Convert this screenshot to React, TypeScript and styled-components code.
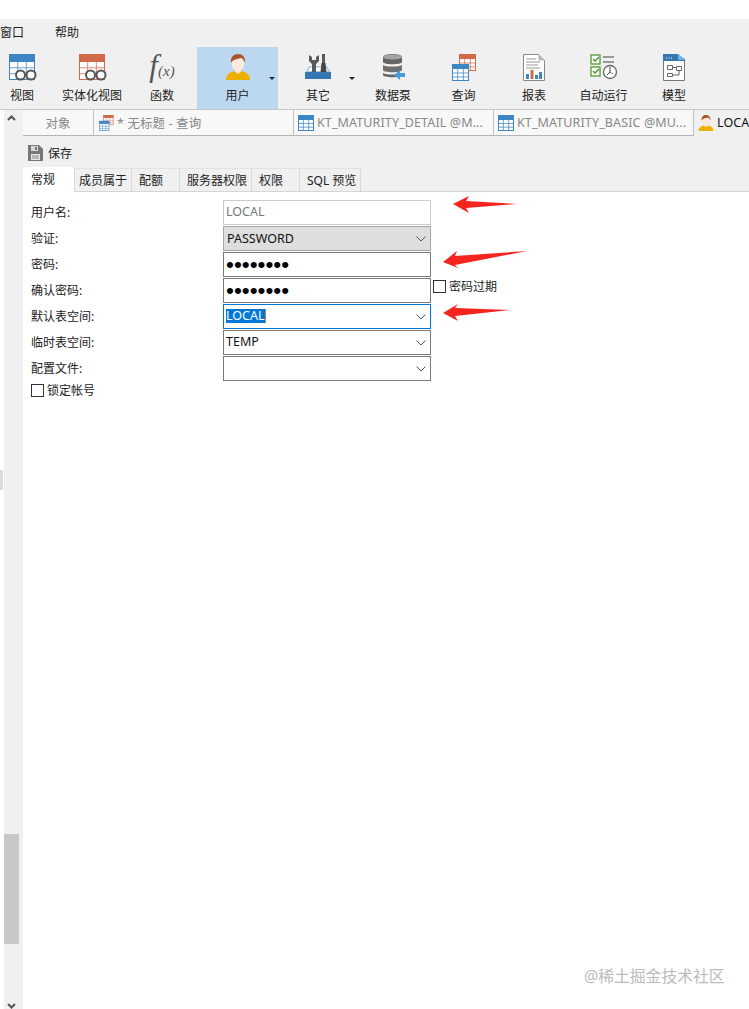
import styled, { createGlobalStyle } from "styled-components";

const GlobalStyle = createGlobalStyle`
  html, body {
    margin: 0;
    padding: 0;
    background: #fff;
  }
  body {
    font-family: "Noto Sans", "Noto Sans CJK SC", sans-serif;
    font-size: 12px;
    color: #222;
  }
`;

const Page = styled.div`
  position: relative;
  width: 749px;
  height: 1009px;
  overflow: hidden;
  background: #fff;
  padding-top: 19px;
  box-sizing: border-box;
  display: flex;
  flex-direction: column;
`;

const MenuBar = styled.div`
  height: 27px;
  background: #f0f0f0;
  display: flex;
  align-items: center;
  gap: 31px;
  span {
    line-height: 26px;
  }
`;

const Toolbar = styled.div`
  height: 63px;
  background: #f0f0f0;
  border-bottom: 1px solid #c8c8c8;
  box-sizing: content-box;
  display: flex;
`;

const ToolItem = styled.div<{ $w: number; $ml?: number; $active?: boolean }>`
  position: relative;
  width: ${(p) => p.$w}px;
  margin-left: ${(p) => p.$ml ?? 0}px;
  height: 62px;
  margin-top: 1px;
  box-sizing: border-box;
  padding-top: 7px;
  display: flex;
  flex-direction: column;
  align-items: center;
  background: ${(p) => (p.$active ? "#bcd8f0" : "transparent")};
  flex-shrink: 0;
`;

const ToolIconBox = styled.div`
  height: 27px;
  display: flex;
  justify-content: center;
  align-items: flex-start;
`;

const ToolLabel = styled.div`
  margin-top: 7px;
  line-height: 16px;
  white-space: nowrap;
`;

const Caret = styled.i`
  position: absolute;
  right: 3px;
  top: 30px;
  width: 0;
  height: 0;
  border-left: 3px solid transparent;
  border-right: 3px solid transparent;
  border-top: 3px solid #222;
`;

const Fx = styled.div`
  font-family: "Liberation Serif", serif;
  font-style: italic;
  color: #555;
  font-size: 31px;
  line-height: 23px;
  white-space: nowrap;
  span {
    font-size: 15px;
    margin-left: 0;
  }
`;

const Body = styled.div`
  flex: 1;
  display: flex;
  min-height: 0;
`;

const Rail = styled.div`
  width: 19px;
  margin-left: 4px;
  background: #f0f0f0;
  display: flex;
  flex-direction: column;
  flex-shrink: 0;
`;

const RailArrow = styled.svg`
  display: block;
  margin: 5px 0 0 3px;
`;

const RailThumb = styled.div`
  margin-top: auto;
  width: 15px;
  height: 110px;
  background: #c8c8c8;
`;

const RailFoot = styled.div`
  height: 65px;
  display: flex;
  align-items: flex-end;
  svg {
    margin: 0 0 0 3px;
  }
`;

const Notch = styled.div`
  position: absolute;
  left: 0;
  top: 470px;
  width: 3px;
  height: 20px;
  background: #dcdcdc;
`;

const Main = styled.div`
  flex: 1;
  min-width: 0;
  display: flex;
  flex-direction: column;
`;

const DocTabs = styled.div`
  height: 26px;
  display: flex;
  background: #f0f0f0;
`;

const DocTab = styled.div<{ $w: number; $active?: boolean; $center?: boolean }>`
  width: ${(p) => p.$w}px;
  flex-shrink: 0;
  box-sizing: border-box;
  height: 26px;
  display: flex;
  align-items: center;
  gap: 3px;
  white-space: nowrap;
  justify-content: ${(p) => (p.$center ? "center" : "flex-start")};
  padding-left: ${(p) => (p.$center ? 0 : 4)}px;
  background: ${(p) => (p.$active ? "#f0f0f0" : "#f8f8f8")};
  color: ${(p) => (p.$active ? "#111" : "#888")};
  border-bottom: 1px solid ${(p) => (p.$active ? "transparent" : "#b4b4b4")};
  border-right: 1px solid ${(p) => (p.$active ? "transparent" : "#c0c0c0")};
  font-size: 12.5px;
  letter-spacing: 0.12px;
  svg {
    flex-shrink: 0;
  }
`;

const SaveRow = styled.div`
  height: 31px;
  box-sizing: border-box;
  padding: 2px 0 0 5px;
  background: #f0f0f0;
  display: flex;
  align-items: center;
  gap: 5px;
`;

const SubTabs = styled.div`
  height: 25px;
  background: #f0f0f0;
  display: flex;
  align-items: flex-end;
  border-bottom: 1px solid #d6d6d6;
  box-sizing: border-box;
`;

const SubTab = styled.div<{ $w: number; $pad: number; $active?: boolean }>`
  width: ${(p) => p.$w}px;
  box-sizing: border-box;
  height: ${(p) => (p.$active ? 25 : 23)}px;
  margin-bottom: ${(p) => (p.$active ? -1 : 0)}px;
  padding-left: ${(p) => p.$pad}px;
  padding-bottom: ${(p) => (p.$active ? 2 : 0)}px;
  display: flex;
  align-items: center;
  background: ${(p) => (p.$active ? "#fff" : "#f0f0f0")};
  border-right: 1px solid #d9d9d9;
  border-top: ${(p) => (p.$active ? "none" : "1px solid #e2e2e2")};
  white-space: nowrap;
`;

const Content = styled.div`
  position: relative;
  flex: 1;
  background: #fff;
  padding: 8px 0 0 8px;
`;

const FormGrid = styled.div`
  display: grid;
  grid-template-columns: 192px 208px auto;
  grid-auto-rows: 25px;
  row-gap: 1px;
  align-items: center;
`;

const FieldLabel = styled.div`
  grid-column: 1;
  line-height: 25px;
`;

const Field = styled.div<{ $tone?: "disabled" | "gray" | "focus" }>`
  grid-column: 2;
  box-sizing: border-box;
  height: 25px;
  display: flex;
  align-items: center;
  justify-content: space-between;
  padding: 0 2px 0 ${(p) => (p.$tone === "gray" ? 3 : 2)}px;
  border: 1px solid
    ${(p) =>
      p.$tone === "disabled"
        ? "#cccccc"
        : p.$tone === "focus"
        ? "#0078d7"
        : p.$tone === "gray"
        ? "#a6a6a6"
        : "#7a7a7a"};
  background: ${(p) => (p.$tone === "gray" ? "#dedede" : "#fff")};
  color: ${(p) => (p.$tone === "disabled" ? "#777" : "#111")};
  font-size: 12.5px;
`;

const FieldText = styled.span`
  margin-top: -2px;
`;

const Dots = styled.span`
  font-family: "Liberation Sans", sans-serif;
  font-size: 22.5px;
  line-height: 20px;
  color: #000;
  height: 20px;
`;

const Selected = styled(FieldText)`
  background: #0078d7;
  color: #fff;
  line-height: 14px;
  border-right: 1px solid #b9803a;
`;

const Chevron = styled.svg`
  margin-right: 2px;
`;

const CheckRow = styled.label<{ $col?: number }>`
  grid-column: ${(p) => p.$col ?? 1} / span 1;
  display: flex;
  align-items: center;
  gap: 3px;
  white-space: nowrap;
`;

const ExpiryRow = styled(CheckRow)`
  margin-left: 2px;
  margin-top: -9px;
`;

const LockRow = styled(CheckRow)`
  margin-top: -9px;
`;

const Box = styled.i`
  display: block;
  box-sizing: border-box;
  width: 13px;
  height: 13px;
  border: 1px solid #333;
  background: #fff;
`;

const Annotations = styled.svg`
  position: absolute;
  left: 0;
  top: 0;
  width: 726px;
  height: 200px;
  pointer-events: none;
`;

const Watermark = styled.div`
  position: absolute;
  left: 584px;
  top: 964px;
  font-size: 15.8px;
  line-height: 24px;
  color: #bbb;
  white-space: nowrap;
`;

const Grid = ({ x, y, w, h, color }: { x: number; y: number; w: number; h: number; color: string }) => (
  <g>
    <rect x={x + 0.5} y={y + 0.5} width={w - 1} height={h - 1} fill="#fff" stroke={color} />
    <rect x={x} y={y} width={w} height={Math.round(h * 0.3)} fill={color} />
    {[1, 2].map((i) => (
      <line key={i} x1={x + (w * i) / 3} x2={x + (w * i) / 3} y1={y} y2={y + h} stroke={color} opacity={0.75} />
    ))}
    {[0.53, 0.76].map((f) => (
      <line key={f} x1={x} x2={x + w} y1={y + h * f} y2={y + h * f} stroke={color} opacity={0.75} />
    ))}
  </g>
);

const ViewIcon = ({ color }: { color: string }) => (
  <svg width="30" height="27" viewBox="0 0 30 27">
    <Grid x={2} y={0} w={26} h={26} color={color} />
    <circle cx="13.500" cy="21" r="4.500" fill="#fff" stroke="#555" strokeWidth="2" />
    <circle cx="24" cy="21" r="4.500" fill="#fff" stroke="#555" strokeWidth="2" />
  </svg>
);

const UserIcon = ({ size = 26 }: { size?: number }) => (
  <svg width={size} height={size} viewBox="0 0 26 26">
    <path d="M1 26c0-6 4-8 9-9h6c5 1 9 3 9 9z" fill="#eeb000" />
    <path d="M10 15h6v3l-3 2-3-2z" fill="#f8e3d4" />
    <ellipse cx="13" cy="9" rx="6.500" ry="8" fill="#fbe9de" />
    <path d="M6 9C5 3 9 0 13 0s8 3 7 9c-1-3-2-4-4-5-3 1-8 1-10 5z" fill="#a8552a" />
  </svg>
);

const ToolsIcon = () => (
  <svg width="28" height="27" viewBox="0 0 28 27">
    <path d="M5 12 1 19h26l-4-7z" fill="#a9c8e2" />
    <path d="M6 13.500 4 17h20l-2-3.500z" fill="#fff" />
    <rect x="1" y="18" width="26" height="7" fill="#3577b0" />
    <path d="M5 1v6l3 3v8h4v-8l3-3V1l-3 2v3H8V3z" fill="#5a5a5a" />
    <rect x="18" y="0" width="3" height="9" fill="#5a5a5a" />
    <path d="M17.500 9h4l1 9h-6z" fill="#444" />
  </svg>
);

const PumpIcon = () => (
  <svg width="26" height="27" viewBox="0 0 26 27">
    <g transform="translate(2 0)">
      <path d="M1 3c0-4 19-4 19 0v5c0 3-19 3-19 0z" fill="#666" />
      <path d="M1 11c3 2 16 2 19 0v5c0 3-19 3-19 0z" fill="#707070" />
      <path d="M1 19c3 2 16 2 19 0v2c0 3-19 3-19 0z" fill="#666" />
      <ellipse cx="10.500" cy="3" rx="9.500" ry="2.600" fill="#a5a5a5" />
    </g>
    <path d="M14 21l6-5v3h5v4h-5v3z" fill="#4a9ae0" />
  </svg>
);

const QueryIcon = ({ size = 27 }: { size?: number }) => (
  <svg width={size} height={size} viewBox="0 0 27 27">
    <Grid x={9} y={0} w={17} h={17} color="#d2694a" />
    <Grid x={2} y={10} w={17} h={17} color="#3d86c6" />
  </svg>
);

const ReportIcon = () => (
  <svg width="22" height="27" viewBox="0 0 22 27">
    <path d="M.5.5h15l6 6v20H.5z" fill="#fff" stroke="#888" />
    <path d="M15.500.5v6h6z" fill="#bbb" />
    <path d="M3 5h10M3 8h14M3 11h12M3 14h14" stroke="#999" />
    <rect x="3" y="20" width="3" height="5" fill="#3d86c6" />
    <rect x="7.500" y="16" width="3" height="9" fill="#d2694a" />
    <rect x="12" y="21" width="3" height="4" fill="#3d86c6" />
    <rect x="16" y="18" width="3" height="7" fill="#3d86c6" />
  </svg>
);

const AutoIcon = () => (
  <svg width="28" height="27" viewBox="0 0 28 27">
    <rect x="1" y="1" width="9" height="9" fill="#fff" stroke="#5e9e3c" strokeWidth="1.400" />
    <rect x="1" y="13" width="9" height="9" fill="#fff" stroke="#5e9e3c" strokeWidth="1.400" />
    <path d="M3 5l2 2 4-4M3 17l2 2 4-4" fill="none" stroke="#5e9e3c" strokeWidth="1.600" />
    <path d="M13 3h11M13 8h11" stroke="#999" strokeWidth="2" />
    <circle cx="20" cy="18" r="6.500" fill="#fff" stroke="#666" strokeWidth="1.300" />
    <path d="M20 13v5l-3 3" fill="none" stroke="#444" />
    <path d="M20 18l3 2" stroke="#d2694a" />
  </svg>
);

const ModelIcon = () => (
  <svg width="22" height="27" viewBox="0 0 22 27">
    <path d="M.5 5h21v21.500H.5z" fill="#fff" stroke="#777" />
    <path d="M0 0h15l7 6v1H0z" fill="#3577b0" />
    <path d="M15 0l7 6h-7z" fill="#6fb0e6" />
    <path d="M3 4h1M5.500 4h1M8 4h1" stroke="#fff" />
    <path d="M4.500 11.500h5v4h-5zM13.500 12.500h5v4h-5zM4.500 19.500h5v3h-5z" fill="#fff" stroke="#666" />
    <path d="M9.500 13.500h4M16 16.500v4.500H9.500" fill="none" stroke="#666" />
  </svg>
);

const SaveIcon = () => (
  <svg width="15" height="16" viewBox="0 0 15 16">
    <path d="M0 0h11l4 4v12H0z" fill="#777" />
    <rect x="3" y="1" width="7" height="5" fill="#d8d8d8" />
    <rect x="7" y="2" width="2" height="3" fill="#777" />
    <rect x="3" y="9" width="9" height="6" fill="#e8e8e8" />
    <path d="M4 11h7M4 13h7" stroke="#888" />
  </svg>
);

const TableTabIcon = () => (
  <svg width="16" height="16" viewBox="0 0 16 16">
    <Grid x={0} y={0} w={16} h={16} color="#3d86c6" />
  </svg>
);

const ComboArrow = () => (
  <Chevron width="10" height="6" viewBox="0 0 10 6">
    <path d="M.5.5 5 5 9.500.5" fill="none" stroke="#555" />
  </Chevron>
);

const tools = [
  { label: "视图", w: 44, icon: <ViewIcon color="#3d86c6" /> },
  { label: "实体化视图", w: 96, icon: <ViewIcon color="#d2694a" /> },
  {
    label: "函数",
    w: 44,
    icon: (
      <Fx>
        f<span>(x)</span>
      </Fx>
    ),
  },
  { label: "用户", w: 81, ml: 13, active: true, caret: true, icon: <UserIcon /> },
  { label: "其它", w: 80, caret: true, icon: <ToolsIcon /> },
  { label: "数据泵", w: 70, icon: <PumpIcon /> },
  { label: "查询", w: 71, icon: <QueryIcon /> },
  { label: "报表", w: 70, icon: <ReportIcon /> },
  { label: "自动运行", w: 69, icon: <AutoIcon /> },
  { label: "模型", w: 72, icon: <ModelIcon /> },
];

const subTabs = [
  { label: "成员属于", w: 57, pad: 4 },
  { label: "配额", w: 48, pad: 7 },
  { label: "服务器权限", w: 72, pad: 7 },
  { label: "权限", w: 48, pad: 7 },
  { label: "SQL 预览", w: 61, pad: 7 },
];

export default function App() {
  return (
    <Page>
      <GlobalStyle />
      <MenuBar>
        <span>窗口</span>
        <span>帮助</span>
      </MenuBar>
      <Toolbar>
        {tools.map((t) => (
          <ToolItem key={t.label} $w={t.w} $ml={t.ml} $active={t.active}>
            <ToolIconBox>{t.icon}</ToolIconBox>
            <ToolLabel>{t.label}</ToolLabel>
            {t.caret && <Caret />}
          </ToolItem>
        ))}
      </Toolbar>
      <Body>
        <Rail>
          <RailArrow width="9" height="6" viewBox="0 0 9 6">
            <path d="M1 5 4.500 1.500 8 5" fill="none" stroke="#555" strokeWidth="2" />
          </RailArrow>
          <RailThumb />
          <RailFoot>
            <svg width="9" height="6" viewBox="0 0 9 6">
              <path d="M1 1 4.500 4.500 8 1" fill="none" stroke="#555" strokeWidth="2" />
            </svg>
          </RailFoot>
        </Rail>
        <Main>
          <DocTabs>
            <DocTab $w={71} $center>
              对象
            </DocTab>
            <DocTab $w={200}>
              <QueryIcon size={16} />
              <span>* 无标题 - 查询</span>
            </DocTab>
            <DocTab $w={200}>
              <TableTabIcon />
              <span>KT_MATURITY_DETAIL @M...</span>
            </DocTab>
            <DocTab $w={200}>
              <TableTabIcon />
              <span>KT_MATURITY_BASIC @MU...</span>
            </DocTab>
            <DocTab $w={55} $active>
              <UserIcon size={16} />
              <span>LOCA</span>
            </DocTab>
          </DocTabs>
          <SaveRow>
            <SaveIcon />
            <span>保存</span>
          </SaveRow>
          <SubTabs>
            <SubTab $w={52} $pad={8} $active>
              常规
            </SubTab>
            {subTabs.map((t) => (
              <SubTab key={t.label} $w={t.w} $pad={t.pad}>
                {t.label}
              </SubTab>
            ))}
          </SubTabs>
          <Content>
            <FormGrid>
              <FieldLabel>用户名:</FieldLabel>
              <Field $tone="disabled">
                <FieldText>LOCAL</FieldText>
              </Field>
              <FieldLabel>验证:</FieldLabel>
              <Field $tone="gray">
                PASSWORD
                <ComboArrow />
              </Field>
              <FieldLabel>密码:</FieldLabel>
              <Field>
                <Dots>••••••••</Dots>
              </Field>
              <FieldLabel>确认密码:</FieldLabel>
              <Field>
                <Dots>••••••••</Dots>
              </Field>
              <ExpiryRow $col={3}>
                <Box />
                密码过期
              </ExpiryRow>
              <FieldLabel>默认表空间:</FieldLabel>
              <Field $tone="focus">
                <Selected>LOCAL</Selected>
                <ComboArrow />
              </Field>
              <FieldLabel>临时表空间:</FieldLabel>
              <Field>
                <FieldText>TEMP</FieldText>
                <ComboArrow />
              </Field>
              <FieldLabel>配置文件:</FieldLabel>
              <Field>
                <span />
                <ComboArrow />
              </Field>
              <LockRow>
                <Box />
                锁定帐号
              </LockRow>
            </FormGrid>
            <Annotations viewBox="23 192 726 200">
              <path d="M453 204 469 196 466 201 517 204 466 208 469 213z" fill="#f5241c" />
              <path d="M443 262 457 251 455 256 527 251 455 265 458 268z" fill="#f5241c" />
              <path d="M443 313 458 304 455 308 511 310 455 316 458 321z" fill="#f5241c" />
            </Annotations>
          </Content>
        </Main>
      </Body>
      <Notch />
      <Watermark>@稀土掘金技术社区</Watermark>
    </Page>
  );
}
